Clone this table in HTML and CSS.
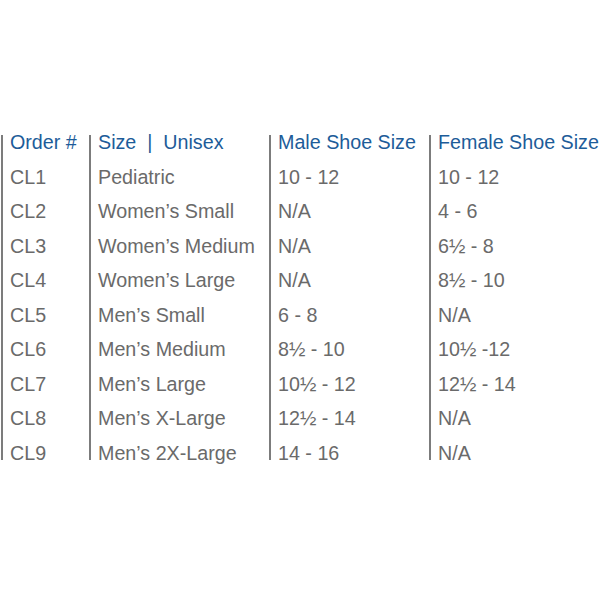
FILE: index.html
```html
<!DOCTYPE html>
<html>
<head>
<meta charset="utf-8">
<link rel="stylesheet" href="styles.css">
</head>
<body>
<div class="table">
  <div class="col c1">
    <div class="hd">Order #</div>
    <div>CL1</div><div>CL2</div><div>CL3</div><div>CL4</div><div>CL5</div><div>CL6</div><div>CL7</div><div>CL8</div><div>CL9</div>
  </div>
  <div class="col c2">
    <div class="hd">Size&nbsp; |&nbsp; Unisex</div>
    <div>Pediatric</div><div>Women’s Small</div><div>Women’s Medium</div><div>Women’s Large</div><div>Men’s Small</div><div>Men’s Medium</div><div>Men’s Large</div><div>Men’s X-Large</div><div>Men’s 2X-Large</div>
  </div>
  <div class="col c3">
    <div class="hd">Male Shoe Size</div>
    <div>10 - 12</div><div>N/A</div><div>N/A</div><div>N/A</div><div>6 - 8</div><div>8½ - 10</div><div>10½ - 12</div><div>12½ - 14</div><div>14 - 16</div>
  </div>
  <div class="col c4">
    <div class="hd">Female Shoe Size</div>
    <div>10 - 12</div><div>4 - 6</div><div>6½ - 8</div><div>8½ - 10</div><div>N/A</div><div>10½ -12</div><div>12½ - 14</div><div>N/A</div><div>N/A</div>
  </div>
</div>
</body>
</html>
```
FILE: styles.css
```css
html, body {
  margin: 0;
  padding: 0;
  background: #ffffff;
}
body {
  font-family: "Liberation Sans", Arial, sans-serif;
  font-size: 19.7px;
  color: #6a6a6a;
}
.table {
  display: flex;
  align-items: flex-start;
  margin-top: 125px;
  padding-left: 1px;
}
.col {
  padding-left: 9px;
  white-space: nowrap;
  line-height: 34.5px;
  background: linear-gradient(#7c7c7c, #7c7c7c) no-repeat 0 10px / 2px calc(100% - 20px);
}
.c1 { width: 79px; }
.c2 { width: 171px; }
.c3 { width: 151px; }
.c4 { flex: 1; }
.hd {
  color: #1d5c99;
}
```
